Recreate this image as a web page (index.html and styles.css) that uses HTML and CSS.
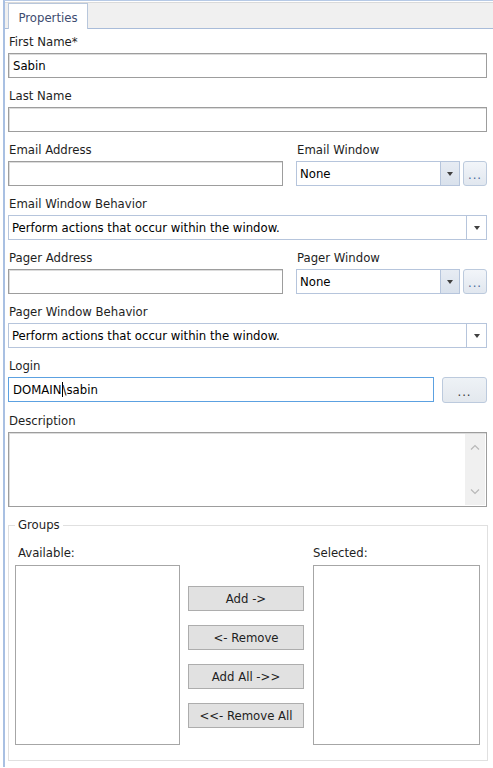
FILE: index.html
```html
<!DOCTYPE html>
<html>
<head>
<meta charset="utf-8">
<link rel="stylesheet" href="styles.css">
</head>
<body>
<div class="panel">
  <div class="tabstrip">
    <div class="tab">Properties</div>
  </div>
  <div class="content">
    <div class="field first">
      <div class="label">First Name*</div>
      <div class="input">Sabin</div>
    </div>
    <div class="field">
      <div class="label">Last Name</div>
      <div class="input"></div>
    </div>
    <div class="row">
      <div class="field col-left">
        <div class="label">Email Address</div>
        <div class="input"></div>
      </div>
      <div class="field col-right">
        <div class="label">Email Window</div>
        <div class="combo-row">
          <div class="combo small"><span class="combo-text">None</span><span class="drop"><span class="arrow"></span></span></div>
          <div class="dots-btn small-dots"><span>...</span></div>
        </div>
      </div>
    </div>
    <div class="field">
      <div class="label">Email Window Behavior</div>
      <div class="combo"><span class="combo-text">Perform actions that occur within the window.</span><span class="drop wide"><span class="arrow"></span></span></div>
    </div>
    <div class="row">
      <div class="field col-left">
        <div class="label">Pager Address</div>
        <div class="input"></div>
      </div>
      <div class="field col-right">
        <div class="label">Pager Window</div>
        <div class="combo-row">
          <div class="combo small"><span class="combo-text">None</span><span class="drop"><span class="arrow"></span></span></div>
          <div class="dots-btn small-dots"><span>...</span></div>
        </div>
      </div>
    </div>
    <div class="field">
      <div class="label">Pager Window Behavior</div>
      <div class="combo"><span class="combo-text">Perform actions that occur within the window.</span><span class="drop wide"><span class="arrow"></span></span></div>
    </div>
    <div class="field">
      <div class="label">Login</div>
      <div class="login-row">
        <div class="input focused">DOMAIN<span class="caret"></span>\sabin</div>
        <div class="dots-btn login-dots"><span>...</span></div>
      </div>
    </div>
    <div class="field">
      <div class="label">Description</div>
      <div class="textarea">
        <div class="scroll">
          <svg width="10" height="6" viewBox="0 0 10 6"><path d="M1 5.5 L5 1.5 L9 5.5" fill="none" stroke="#b8b8b8" stroke-width="1.2"/></svg>
          <svg width="10" height="6" viewBox="0 0 10 6"><path d="M1 0.5 L5 4.5 L9 0.5" fill="none" stroke="#b8b8b8" stroke-width="1.2"/></svg>
        </div>
      </div>
    </div>
    <fieldset class="groups">
      <legend>Groups</legend>
      <div class="groups-body">
        <div class="list-col">
          <div class="list-label">Available:</div>
          <div class="listbox left-list"></div>
        </div>
        <div class="btn-col">
          <div class="gbtn">Add -&gt;</div>
          <div class="gbtn">&lt;- Remove</div>
          <div class="gbtn">Add All -&gt;&gt;</div>
          <div class="gbtn">&lt;&lt;- Remove All</div>
        </div>
        <div class="list-col">
          <div class="list-label sel">Selected:</div>
          <div class="listbox right-list"></div>
        </div>
      </div>
    </fieldset>
  </div>
</div>
</body>
</html>
```

FILE: styles.css
```css
html, body {
  margin: 0;
  padding: 0;
  background: #ffffff;
}
body {
  font-family: "DejaVu Sans Condensed", "DejaVu Sans", sans-serif;
  font-size: 13px;
  color: #1e1e1e;
  width: 493px;
  height: 768px;
  overflow: hidden;
}
.panel {
  margin-left: 3px;
  border-left: 2px solid #a9c0e2;
  border-top: 1px solid #b7cae6;
  height: 767px;
  box-sizing: border-box;
}
.tabstrip {
  margin-top: 1px;
  height: 27px;
  box-sizing: border-box;
  background: #f0f0f0;
  border-top: 1px solid #dadada;
  border-bottom: 1px solid #a9bcd9;
  display: flex;
  align-items: flex-end;
  padding-left: 3px;
}
.tab {
  width: 80px;
  height: 26px;
  margin-bottom: -1px;
  box-sizing: border-box;
  background: #ffffff;
  border: 1px solid #b8c7dc;
  border-bottom: none;
  color: #3e4c70;
  display: flex;
  align-items: center;
  justify-content: center;
  padding-top: 2px;
}
.content {
  padding: 0 6px 0 3px;
}
.field {
  margin-top: 10px;
}
.field.first {
  margin-top: 5px;
}
.label {
  line-height: 15px;
  height: 15px;
  margin-bottom: 4px;
  padding-left: 1px;
  white-space: nowrap;
}
.input {
  height: 25px;
  box-sizing: border-box;
  border: 1px solid #9d9d9d;
  box-shadow: inset 1px 1px 0 #dcdcdc;
  background: #fff;
  padding: 0 4px;
  line-height: 23px;
  color: #000;
  display: flex;
  align-items: center;
}
.input.focused {
  border-color: #5ca1e1;
  box-shadow: none;
  flex: 0 0 426px;
}
.caret {
  display: inline-block;
  width: 1px;
  height: 15px;
  background: #000;
}
.row {
  display: flex;
  gap: 13px;
}
.col-left {
  width: 275px;
}
.col-right {
  flex: 1;
}
.combo-row {
  display: flex;
  gap: 3px;
}
.combo {
  height: 25px;
  box-sizing: border-box;
  border: 1px solid #b6c5dc;
  background: #fff;
  display: flex;
  align-items: stretch;
  color: #000;
}
.combo.small {
  width: 164px;
}
.combo-text {
  flex: 1;
  padding-left: 3px;
  display: flex;
  align-items: center;
  white-space: nowrap;
  overflow: hidden;
}
.drop {
  width: 18px;
  border-left: 1px solid #b6c5dc;
  background: linear-gradient(#e7ecf3, #d9e1ec);
  display: flex;
  align-items: center;
  justify-content: center;
}
.drop.wide {
  width: 19px;
  background: #fff;
}
.arrow {
  width: 0;
  height: 0;
  border-left: 3.5px solid transparent;
  border-right: 3.5px solid transparent;
  border-top: 4px solid #404040;
}
.dots-btn {
  box-sizing: border-box;
  border: 1px solid #bccadd;
  border-radius: 3px;
  background: linear-gradient(#f2f5f9, #e1e7ef);
  display: flex;
  align-items: center;
  justify-content: center;
  color: #4b6a98;
  letter-spacing: 1px;
}
.dots-btn span {
  position: relative;
  top: 1px;
}
.small-dots {
  width: 24px;
  height: 25px;
}
.login-row {
  display: flex;
  gap: 8px;
}
.login-dots {
  width: 46px;
  height: 26px;
  color: #3a3a3a;
  background: linear-gradient(#eef2f6, #e3e8ee);
}
.textarea {
  height: 75px;
  box-sizing: border-box;
  border: 1px solid #9d9d9d;
  box-shadow: inset 1px 1px 0 #dcdcdc;
  background: #fff;
  display: flex;
  justify-content: flex-end;
  padding: 1px 1px 1px 0;
}
.scroll {
  width: 20px;
  background: #f0f0f0;
  display: flex;
  flex-direction: column;
  align-items: center;
  justify-content: space-between;
  padding: 10px 0 10px 0;
}
.groups {
  margin: 11px 0 0 0;
  padding: 0 7px 13px 6px;
  border: 1px solid #e0e0e0;
  height: 243px;
  box-sizing: border-box;
}
.groups legend {
  padding: 0 3px;
  margin-left: 0;
  line-height: 14px;
}
.groups-body {
  display: flex;
  align-items: flex-start;
}
.list-col {
  display: flex;
  flex-direction: column;
}
.list-label {
  line-height: 15px;
  height: 15px;
  margin-top: 13px;
  margin-bottom: 5px;
  padding-left: 3px;
}
.list-label.sel {
  padding-left: 0;
}
.listbox {
  height: 180px;
  box-sizing: border-box;
  border: 1px solid #a6a6a6;
  background: #fff;
}
.left-list {
  width: 165px;
}
.right-list {
  width: 167px;
}
.btn-col {
  width: 116px;
  margin: 54px 9px 0 8px;
  display: flex;
  flex-direction: column;
  gap: 14px;
}
.gbtn {
  height: 25px;
  box-sizing: border-box;
  border: 1px solid #adadad;
  background: #e1e1e1;
  display: flex;
  align-items: center;
  justify-content: center;
  color: #1e1e1e;
  white-space: nowrap;
}
```
